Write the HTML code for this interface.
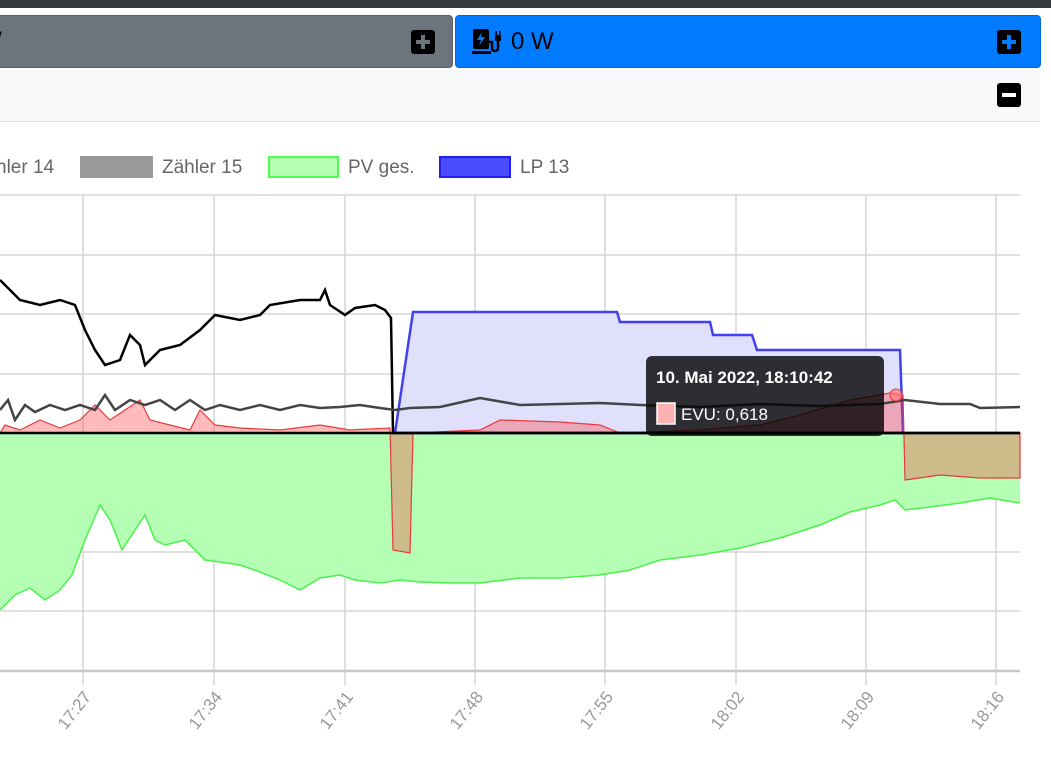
<!DOCTYPE html>
<html><head><meta charset="utf-8"><style>
body{margin:0;width:1051px;height:765px;overflow:hidden;background:#fff;font-family:"Liberation Sans",sans-serif;position:relative}
.top{position:absolute;left:0;top:0;width:1051px;height:8px;background:#343a40}
.btn{position:absolute;top:15px;height:53px;border-radius:4px;box-sizing:border-box}
.g{left:-6px;width:459px;background:#6c757d;border:1px solid #5a6268}
.b{left:455px;width:586px;background:#007bff;border:1px solid #0069d9}
.pl{position:absolute;top:14px;width:24px;height:24px;background:#000;border-radius:3px}
.pl:before{content:"";position:absolute;left:5px;top:10px;width:14px;height:4px;background:var(--c)}
.pl:after{content:"";position:absolute;left:10px;top:5px;width:4px;height:14px;background:var(--c)}
.panel{position:absolute;left:0;top:70px;width:1040px;height:51px;background:#f8f9fa;border-bottom:1px solid #dee2e6}
.mi{position:absolute;left:997px;top:13px;width:24px;height:24px;background:#000;border-radius:3px}
.mi:before{content:"";position:absolute;left:5px;top:10px;width:14px;height:4px;background:#fff}
</style></head><body>
<div class="top"></div>
<div class="btn g"><span style="position:absolute;left:0;top:12px;font-size:24px;color:#000">/</span><div class="pl" style="left:416px;--c:#6c757d"></div></div>
<div class="btn b">
<svg style="position:absolute;left:16px;top:12px" width="32" height="28" viewBox="0 0 32 28"><rect x="1" y="1" width="16" height="20" rx="2" fill="#000"/><path d="M10 4 L5 12 L9 12 L7 18 L13 9 L9 9 Z" fill="#007bff"/><rect x="0" y="23" width="19" height="3" fill="#000"/><path d="M17 14 H20 V20 Q20 23 23 23 Q26 23 26 20 V12" stroke="#000" stroke-width="2.5" fill="none"/><rect x="23" y="7" width="6" height="6" rx="1" fill="#000"/><rect x="23.5" y="3" width="1.5" height="4" fill="#000"/><rect x="27" y="3" width="1.5" height="4" fill="#000"/></svg>
<span style="position:absolute;left:55px;top:12px;font-size:24px;color:#000">0 W</span>
<div class="pl" style="left:541px;--c:#007bff"></div></div>
<div class="panel"><div class="mi"></div></div>
<div style="position:absolute;left:1040px;top:70px;width:11px;height:695px;background:#fff"></div>
<svg style="position:absolute;left:0;top:122px" width="1040" height="643" viewBox="0 122 1040 643" font-family="Liberation Sans, sans-serif">
<g font-size="19" fill="#666">
<text x="-4" y="173">hler 14</text>
<rect x="80" y="156" width="73" height="22" fill="#999"/>
<text x="162" y="173">Zähler 15</text>
<rect x="269" y="157" width="69" height="20" fill="#b4ffb4" stroke="#4cff4c" stroke-width="2"/>
<text x="348" y="173">PV ges.</text>
<rect x="440" y="157" width="70" height="20" fill="#4c4cff" stroke="#2020ee" stroke-width="2"/>
<text x="520" y="173">LP 13</text>
</g>
<g stroke="#d6d6d6" stroke-width="1.5">
<line x1="0" y1="195" x2="1020" y2="195"/><line x1="0" y1="255" x2="1020" y2="255"/><line x1="0" y1="314" x2="1020" y2="314"/><line x1="0" y1="374" x2="1020" y2="374"/><line x1="0" y1="492" x2="1020" y2="492"/><line x1="0" y1="552" x2="1020" y2="552"/><line x1="0" y1="611" x2="1020" y2="611"/>
<line x1="83" y1="195" x2="83" y2="685"/><line x1="214" y1="195" x2="214" y2="685"/><line x1="345" y1="195" x2="345" y2="685"/><line x1="475" y1="195" x2="475" y2="685"/><line x1="605" y1="195" x2="605" y2="685"/><line x1="736" y1="195" x2="736" y2="685"/><line x1="866" y1="195" x2="866" y2="685"/><line x1="996" y1="195" x2="996" y2="685"/>
</g>
<line x1="0" y1="671" x2="1020" y2="671" stroke="#c8c8c8" stroke-width="2.5"/>
<path d="M0 433 L0 610 L15 595 L30 588 L45 600 L60 590 L72 575 L85 540 L100 505 L110 520 L122 550 L135 530 L145 515 L155 540 L165 545 L185 540 L205 560 L220 562 L240 565 L260 572 L280 580 L300 590 L320 578 L340 575 L355 580 L380 583 L400 580 L420 582 L450 583 L480 583 L520 578 L560 578 L600 575 L630 570 L660 560 L700 555 L740 548 L780 538 L820 525 L850 512 L880 505 L895 500 L905 510 L930 507 L960 503 L990 498 L1020 503 L1020 433 Z" fill="#b4ffb4" stroke="none"/>
<path d="M0 610 L15 595 L30 588 L45 600 L60 590 L72 575 L85 540 L100 505 L110 520 L122 550 L135 530 L145 515 L155 540 L165 545 L185 540 L205 560 L220 562 L240 565 L260 572 L280 580 L300 590 L320 578 L340 575 L355 580 L380 583 L400 580 L420 582 L450 583 L480 583 L520 578 L560 578 L600 575 L630 570 L660 560 L700 555 L740 548 L780 538 L820 525 L850 512 L880 505 L895 500 L905 510 L930 507 L960 503 L990 498 L1020 503" fill="none" stroke="#4cf04c" stroke-width="1.5"/>
<path d="M395 433 L413 312 L617 312 L620 322 L710 322 L713 335 L752 335 L757 350 L900 350 L903 433 Z" fill="#e0e0fc" stroke="#4040f0" stroke-width="2.5"/>
<path d="M0 433 L5 425 L20 430 L40 420 L60 428 L80 420 L95 405 L110 420 L125 410 L140 400 L150 420 L170 425 L190 430 L200 410 L215 425 L240 428 L280 430 L320 425 L350 430 L390 428 L393 550 L410 553 L413 433 L480 430 L500 420 L560 422 L600 425 L620 433 L700 430 L760 425 L800 415 L850 400 L890 393 L903 395 L905 480 L940 475 L980 478 L1020 478 L1020 433 Z" fill="rgba(255,60,60,0.35)" stroke="#e83a3a" stroke-width="1.2"/>
<path d="M0 280 L10 290 L20 300 L40 305 L60 300 L75 305 L85 330 L95 350 L105 365 L120 360 L130 335 L140 345 L145 365 L160 350 L180 345 L200 330 L215 315 L240 320 L260 315 L270 305 L300 300 L320 300 L325 290 L330 305 L345 315 L355 308 L375 305 L385 310 L391 318 L393 433 L1020 433" fill="none" stroke="#000" stroke-width="2.5"/>
<path d="M0 410 L8 400 L15 420 L25 405 L35 412 L50 405 L65 410 L80 405 L95 410 L105 395 L115 410 L130 400 L145 405 L160 400 L175 410 L190 400 L205 410 L220 405 L240 410 L260 405 L280 410 L300 405 L320 408 L340 407 L360 405 L380 408 L395 410 L410 408 L440 407 L480 398 L520 405 L600 403 L640 405 L700 407 L760 404 L820 406 L880 404 L905 400 L940 404 L970 404 L980 408 L1020 407" fill="none" stroke="#444" stroke-width="2.5"/>
<line x1="0" y1="433" x2="1020" y2="433" stroke="#000" stroke-width="2.5"/>
<circle cx="896" cy="395" r="6" fill="rgba(255,120,120,0.7)" stroke="#e83a3a"/>
<rect x="646" y="356" width="238" height="80" rx="6" fill="rgba(0,0,0,0.8)"/>
<text x="656" y="383" fill="#fff" font-weight="bold" font-size="17">10. Mai 2022, 18:10:42</text>
<rect x="657" y="403" width="18" height="21" fill="#ffb0b0" stroke="#fff" stroke-width="1.5"/>
<text x="681" y="420" fill="#fff" font-size="17">EVU: 0,618</text>
<g font-size="17" fill="#999" text-anchor="end">
<text transform="translate(92,697) rotate(-52)">17:27</text>
<text transform="translate(223,697) rotate(-52)">17:34</text>
<text transform="translate(354,697) rotate(-52)">17:41</text>
<text transform="translate(484,697) rotate(-52)">17:48</text>
<text transform="translate(614,697) rotate(-52)">17:55</text>
<text transform="translate(745,697) rotate(-52)">18:02</text>
<text transform="translate(875,697) rotate(-52)">18:09</text>
<text transform="translate(1005,697) rotate(-52)">18:16</text>
</g>
</svg>
</body></html>
